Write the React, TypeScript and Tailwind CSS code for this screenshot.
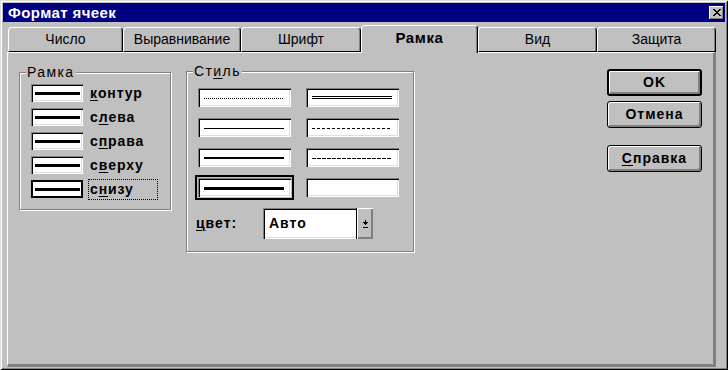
import type { ReactNode } from "react";

const sunken =
  "bg-white shadow-[inset_1px_1px_0_#808080,inset_2px_2px_0_#000,inset_-1px_-1px_0_#fff,inset_-2px_-2px_0_#dfdfdf]";

const raised =
  "bg-[#c0c0c0] border border-black rounded-[3px] shadow-[inset_1px_1px_0_#fff,inset_-1px_-1px_0_#808080,inset_-2px_-2px_0_#808080]";

function Key({ text, at }: { text: string; at: number }) {
  return (
    <>
      {text.slice(0, at)}
      <span className="underline underline-offset-[2px] decoration-1">{text[at]}</span>
      {text.slice(at + 1)}
    </>
  );
}

const tabs = [
  { label: "Число", w: "w-[115px]" },
  { label: "Выравнивание", w: "w-[118px]" },
  { label: "Шрифт", w: "w-[120px]" },
  { label: "Рамка", w: "w-[117px]", active: true },
  { label: "Вид", w: "w-[119px]" },
  { label: "Защита", w: "w-[119px]" },
];

const sides = [
  { label: "контур", at: 0 },
  { label: "слева", at: 1 },
  { label: "справа", at: 1 },
  { label: "сверху", at: 1 },
  { label: "снизу", at: 1, focus: true },
];

// line samples, row by row: left then right
const styles = ["dotted", "double", "thin", "dash", "medium", "dash2", "thick", "none"];

function Sample({ kind }: { kind: string }) {
  return (
    <svg width="80" height="6" shapeRendering="crispEdges">
      {kind === "dotted" && <line x1="0" y1="3.5" x2="80" y2="3.5" stroke="#000" strokeDasharray="1 1" />}
      {kind === "double" && (
        <>
          <rect x="0" y="1" width="80" height="1" />
          <rect x="0" y="3" width="80" height="1" />
        </>
      )}
      {kind === "thin" && <rect x="0" y="3" width="80" height="1" />}
      {kind === "dash" && <line x1="0" y1="3.5" x2="80" y2="3.5" stroke="#000" strokeDasharray="3 2" />}
      {kind === "medium" && <rect x="0" y="2" width="80" height="2" />}
      {kind === "dash2" && <line x1="0" y1="3.5" x2="80" y2="3.5" stroke="#000" strokeDasharray="4 1" />}
      {kind === "thick" && <rect x="0" y="2" width="80" height="3" />}
    </svg>
  );
}

function Group({ title, className, children }: { title: ReactNode; className: string; children: ReactNode }) {
  return (
    <fieldset
      className={`border border-[#808080] shadow-[inset_1px_1px_0_#fff,1px_1px_0_#fff] ${className}`}
    >
      <legend className="ml-[6px] px-[1px] bg-[#c0c0c0] text-[14px] leading-[16px] tracking-[1.4px]">{title}</legend>
      {children}
    </fieldset>
  );
}

export default function App() {
  return (
    <div className="w-[728px] h-[370px] bg-[#c0c0c0] p-[3px] flex flex-col text-black font-['Liberation_Sans',Arial,sans-serif] shadow-[inset_1px_1px_0_#dfdfdf,inset_-1px_-1px_0_#000,inset_2px_2px_0_#fff,inset_-2px_-2px_0_#808080]">
      {/* title bar */}
      <div className="h-[19px] bg-[#000080] flex items-center justify-between pl-[5px] pr-[1px]">
        <span className="text-white font-bold text-[15px] leading-none tracking-[0.4px]">Формат ячеек</span>
        <div className="w-[15px] h-[14px] bg-[#c0c0c0] flex items-center justify-center shadow-[inset_-1px_-1px_0_#000,inset_1px_1px_0_#fff,inset_-2px_-2px_0_#808080]">
          <svg width="8" height="7" shapeRendering="crispEdges" className="-mt-px">
            <path d="M0 0h2v1h-2zM6 0h2v1h-2zM1 1h2v1h-2zM5 1h2v1h-2zM2 2h4v1h-4zM3 3h2v1h-2zM2 4h4v1h-4zM1 5h2v1h-2zM5 5h2v1h-2zM0 6h2v1h-2zM6 6h2v1h-2z" />
          </svg>
        </div>
      </div>

      <div className="flex-1 w-[709px] ml-[4px] flex flex-col">
        {/* tabs */}
        <div className="h-[30px] flex items-end pl-[1px]">
          {tabs.map((t) =>
            t.active ? (
              <div
                key={t.label}
                className={`${t.w} h-[28px] -mb-px relative z-10 bg-[#c0c0c0] border-t border-l border-white border-r border-r-black rounded-t-[4px] shadow-[inset_-1px_0_0_#808080] flex items-center justify-center pb-[2px] font-bold text-[15px] tracking-[0.6px]`}
              >
                {t.label}
              </div>
            ) : (
              <div
                key={t.label}
                className={`${t.w} h-[25px] bg-[#c0c0c0] border-t border-l border-white border-r border-r-black border-b border-b-black rounded-t-[4px] shadow-[inset_-1px_0_0_#808080] flex items-center justify-center text-[14px]`}
              >
                {t.label}
              </div>
            )
          )}
        </div>

        {/* panel */}
        <div className="flex-1 border-t border-l border-white border-r-[3px] border-b-[3px] border-r-[#808080] border-b-[#808080] flex items-start">
          <Group title="Рамка" className="w-[152px] h-[146px] ml-[11px] mt-[11px]">
            <div className="pl-[11px] pt-[4px] flex flex-col gap-[6px]">
              {sides.map((s) => (
                <div key={s.label} className="h-[18px] flex items-center">
                  <div
                    className={`w-[52px] h-[18px] flex items-center justify-center ${
                      s.focus ? "bg-white border-2 border-black" : sunken
                    }`}
                  >
                    <div className="w-[45px] h-[3px] bg-black" />
                  </div>
                  <div
                    className={`ml-[5px] w-[70px] h-[21px] pl-[1px] flex items-center border border-dotted font-bold text-[14px] tracking-[0.9px] ${
                      s.focus ? "border-black" : "border-transparent"
                    }`}
                  >
                    <Key text={s.label} at={s.at} />
                  </div>
                </div>
              ))}
            </div>
          </Group>

          <Group
            title={<Key text="Стиль" at={2} />}
            className="w-[228px] h-[189px] ml-[15px] mt-[10px]"
          >
            <div className="pl-[11px] pt-[9px]">
              <div className="grid grid-cols-[93px_93px] gap-x-[15px] gap-y-[11px]">
                {styles.map((k) => (
                  <div
                    key={k}
                    className={`h-[19px] px-[6px] flex items-center ${sunken} ${
                      k === "thick" ? "outline-2 outline-black outline-offset-[1px]" : ""
                    }`}
                  >
                    <Sample kind={k} />
                  </div>
                ))}
              </div>
              <div className="mt-[11px] -ml-[2px] flex items-center">
                <span className="w-[67px] font-bold text-[14px] tracking-[1px]">
                  <Key text="цвет:" at={0} />
                </span>
                <div className={`w-[110px] h-[31px] flex items-stretch ${sunken}`}>
                  <span className="flex-1 pl-[6px] flex items-center font-bold text-[14px] tracking-[1px]">Авто</span>
                  <div className="w-[17px] bg-[#c0c0c0] border-l border-black shadow-[inset_1px_1px_0_#fff,inset_-1px_-1px_0_#808080,inset_-2px_-2px_0_#808080] flex items-center justify-center">
                    <svg width="5" height="8" shapeRendering="crispEdges">
                      <path d="M2 0h1v2h-1zM0 2h5v1h-5zM1 3h3v1h-3zM2 4h1v1h-1zM0 7h5v1h-5z" />
                    </svg>
                  </div>
                </div>
              </div>
            </div>
          </Group>

          <div className="ml-auto mr-[11px] mt-[16px] w-[95px] flex flex-col">
            <button className={`h-[27px] ${raised} border-2 font-bold text-[14px] tracking-[1px]`}>OK</button>
            <button className={`h-[27px] mt-[5px] ${raised} font-bold text-[14px] tracking-[1px]`}>Отмена</button>
            <button className={`h-[27px] mt-[17px] ${raised} font-bold text-[14px] tracking-[1px]`}>
              <Key text="Справка" at={0} />
            </button>
          </div>
        </div>
      </div>
    </div>
  );
}
